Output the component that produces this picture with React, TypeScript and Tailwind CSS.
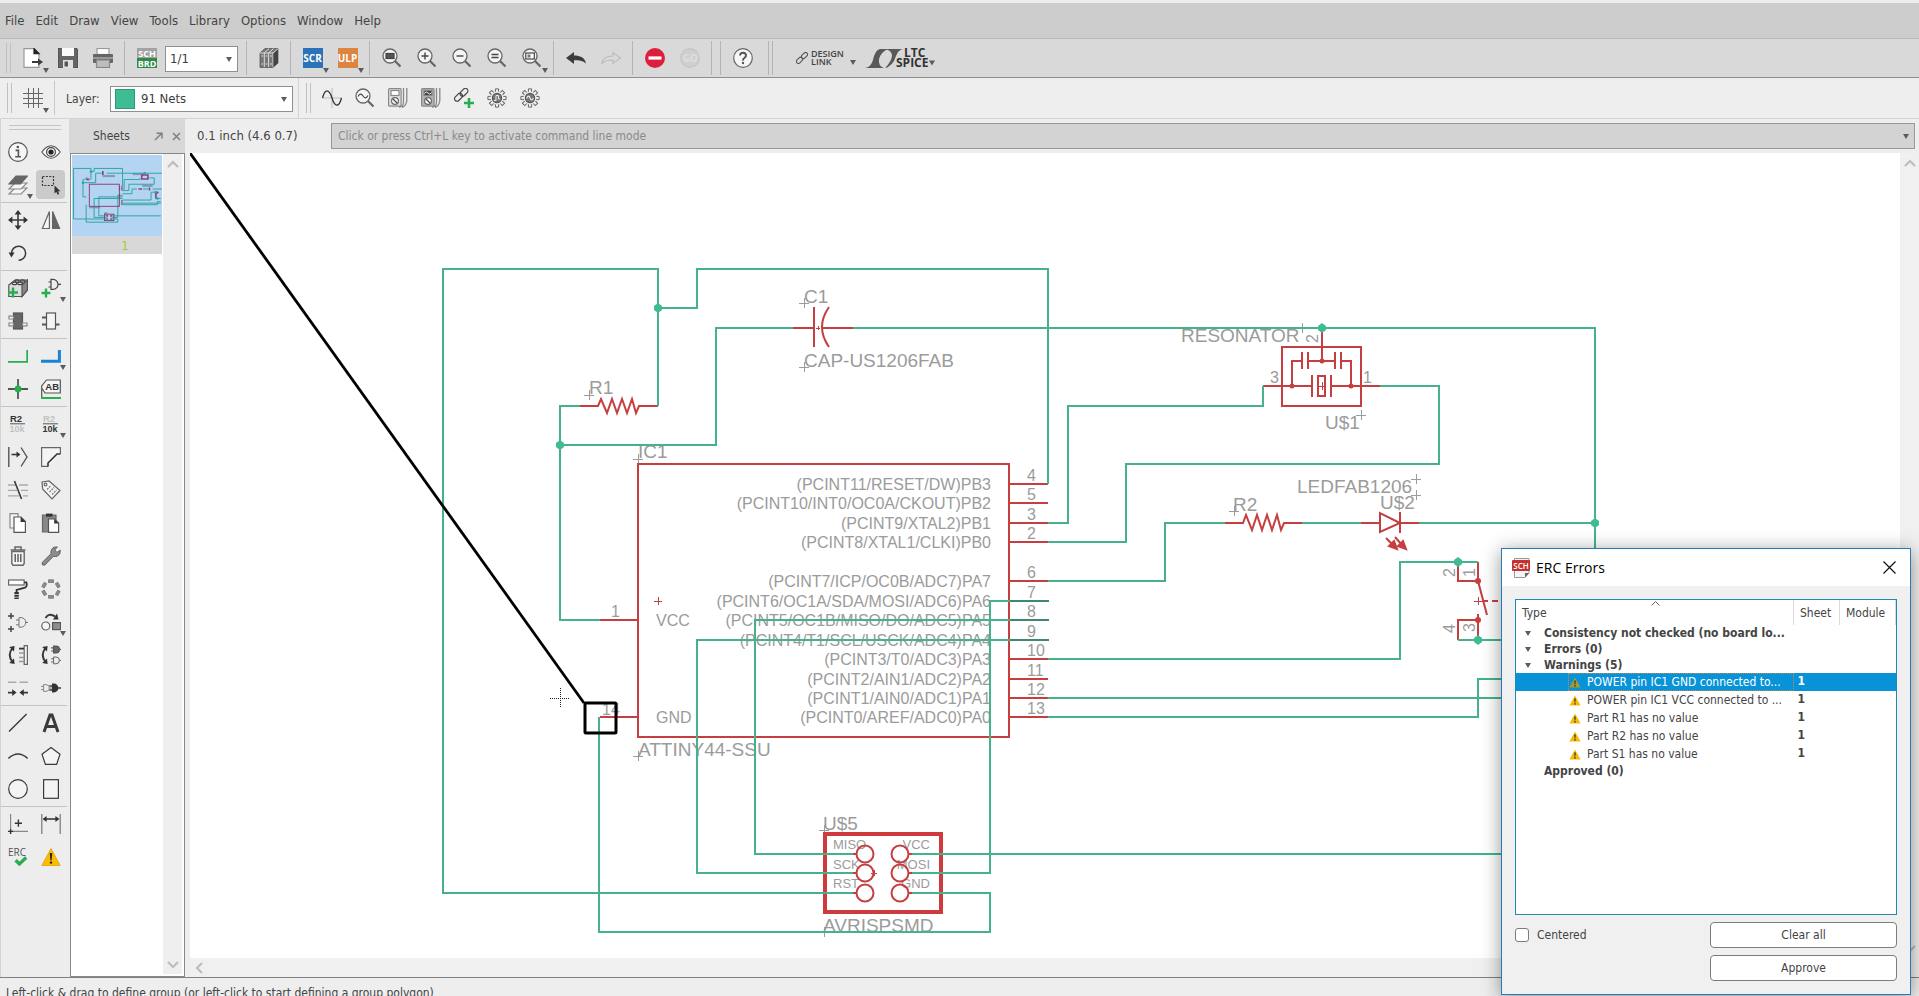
import React, { ReactNode } from "react";

const D = "#3a3a3a";
const GREEN = "#27ae50";
const NET = "#45b28c";
const RED = "#c63f40";
const LABEL = "#9b9b9b";

/* ---------- small shared parts ---------- */

function Icon({ children, size = 20 }: { children: ReactNode; size?: number }) {
  return (
    <svg viewBox="0 0 20 20" width={size} height={size} fill="none" stroke={D} strokeWidth="1.2" aria-hidden="true">
      {children}
    </svg>
  );
}

function DownArrow({ className = "" }: { className?: string }) {
  return (
    <svg viewBox="0 0 6 5" className={"pointer-events-none h-[5px] w-[6px] " + className} aria-hidden="true">
      <path d="M0 0H6L3 5Z" fill="#5c5c5c" />
    </svg>
  );
}

function Chevron({ dir }: { dir: "up" | "down" | "left" }) {
  const d = dir === "up" ? "M1 9L6 4L11 9" : dir === "down" ? "M1 4L6 9L11 4" : "M8 1L3 6L8 11";
  return (
    <svg viewBox="0 0 12 12" className="h-3 w-3" aria-hidden="true">
      <path d={d} fill="none" stroke="#bdbdbd" strokeWidth="2.2" />
    </svg>
  );
}

function TopButton({ label, menu, children }: { label: string; menu?: boolean; children: ReactNode }) {
  return (
    <button aria-label={label} className="relative flex h-[38px] w-[35px] shrink-0 items-center justify-center">
      {children}
      {menu && <DownArrow className="absolute right-px bottom-1" />}
    </button>
  );
}

function Separator() {
  return (
    <div className="flex h-[38px] w-[9px] shrink-0 justify-center py-[2px]">
      <div className="w-px bg-[#b4b4b4]" />
    </div>
  );
}

function Grip() {
  return <div className="h-[30px] w-[5px] shrink-0 border-x border-[#c0c0c0]" />;
}

/* ---------- toolbar icons ---------- */

function Magnifier({ children }: { children: ReactNode }) {
  return (
    <Icon>
      <circle cx="8" cy="8" r="7" fill="#f4f4f4" stroke="#666" strokeWidth="1.3" />
      <path d="M13 13L18.5 18.5" stroke="#666" strokeWidth="2.2" />
      {children}
    </Icon>
  );
}

function Gear({ children }: { children: ReactNode }) {
  const teeth = [0, 45, 90, 135, 180, 225, 270, 315];
  return (
    <Icon>
      {teeth.map((a) => (
        <path key={a} d="M8.4 4.2V0.9H11.6V4.2" stroke="#666" fill="#eee" strokeWidth="1" transform={`rotate(${a} 10 10)`} />
      ))}
      <circle cx="10" cy="10" r="6.4" fill="#eee" stroke="none" />
      <circle cx="10" cy="10" r="4.6" fill="#777" stroke="#555" />
      {children}
    </Icon>
  );
}

function Meter({ dark }: { dark?: boolean }) {
  return (
    <Icon>
      <rect x="0.6" y="0.6" width="12.5" height="17.5" rx="1" fill={dark ? "#b5b5b5" : "#e0e0e0"} stroke="#888" />
      <rect x="3" y="2.5" width="8" height="5" fill={dark ? "#444" : "#fff"} stroke="#888" />
      {dark && <path d="M3.5 5.5Q5 2.5 7 5T10.5 4.5" stroke="#eee" strokeWidth="1" />}
      <circle cx="7" cy="13" r="3.4" fill="#fff" stroke="#666" />
      <path d="M5 11L9 15" stroke="#444" />
      <path d="M15.5 0V9M18.8 0V9M15.5 9V14Q15.5 19 11 19M18.8 9V13Q18 18 14 19.4" stroke="#888" strokeWidth="1.3" />
    </Icon>
  );
}

function Toolbar() {
  return (
    <div className="flex h-[39px] shrink-0 items-start border-b border-[#8e8e8e] bg-[#d9d9d9] pl-[6px]">
      <div className="flex h-[38px] w-[9px] items-center">
        <Grip />
      </div>
      <TopButton label="New" menu>
        <Icon>
          <path d="M1 .6H11L16 5.6V19.4H1Z" fill="#fff" stroke="#999" />
          <path d="M11 .6V5.6H16Z" fill="#222" stroke="#222" />
          <path d="M9 14H16" stroke={D} strokeWidth="2" />
          <path d="M15 10.5L20 14L15 17.5Z" fill={D} stroke="none" />
        </Icon>
      </TopButton>
      <TopButton label="Save">
        <Icon>
          <path d="M.5 .5H18.5L19.5 1.5V19.5H.5Z" fill="#666" stroke="#555" />
          <rect x="4" y="0" width="12" height="8" fill="#fafafa" stroke="none" />
          <rect x="5" y="12" width="10" height="8" fill="#e0e0e0" stroke="none" />
          <rect x="6.5" y="13.5" width="3.5" height="5" fill="#555" stroke="none" />
        </Icon>
      </TopButton>
      <TopButton label="Print">
        <Icon>
          <rect x="4" y=".5" width="12" height="6" fill="#fff" stroke="#999" />
          <rect x="0" y="6" width="20" height="9" rx="1" fill="#666" stroke="none" />
          <rect x="0" y="9" width="20" height="2" fill="#999" stroke="none" />
          <rect x="3.5" y="12" width="13" height="7.5" fill="#bdbdbd" stroke="#888" />
        </Icon>
      </TopButton>
      <Separator />
      <TopButton label="Switch to board">
        <Icon>
          <rect width="20" height="10" fill="#a3a3a3" stroke="none" />
          <rect y="10" width="20" height="10" fill="#2f8a49" stroke="none" />
          <g fill="#fff" stroke="none" fontFamily="Open Sans, sans-serif" fontWeight="700" fontSize="9" textAnchor="middle">
            <text x="10" y="8.5">SCH</text>
            <text x="10" y="18.5">BRD</text>
          </g>
        </Icon>
      </TopButton>
      <div className="relative mx-px mt-[7px] h-[26px] w-[73px] shrink-0">
        <select aria-label="Sheet" className="h-full w-full appearance-none border border-[#8f8f8f] bg-white pl-1 text-[13px] text-[#3c3c3c]">
          <option>1/1</option>
        </select>
        <DownArrow className="absolute top-[11px] right-[6px]" />
      </div>
      <div className="w-[3px]" />
      <Separator />
      <TopButton label="Library manager">
        <Icon>
          <path d="M1 5L6 .6H19L19 15L14 19.4H1Z" fill="#777" stroke="#555" strokeWidth=".8" />
          <path d="M1 5H14L19 .8M5.3 5V19M9.6 5V19M14 5V19M5.3 5L10 .6M9.6 5L14.5 .6" stroke="#e8e8e8" strokeWidth=".9" />
          <path d="M2.3 8H4.2M6.6 8H8.5M11 8H13M2.3 16H4.2M6.6 16H8.5M11 16H13" stroke="#ddd" />
          <path d="M14.4 5.4L19 1.5V15L14.4 19Z" fill="#444" stroke="none" />
        </Icon>
      </TopButton>
      <Separator />
      <TopButton label="Run script" menu>
        <span className="flex h-5 w-5 items-center justify-center bg-[#2c72b8] font-['Open_Sans'] text-[10px] font-bold text-white">SCR</span>
      </TopButton>
      <TopButton label="Run ULP" menu>
        <span className="flex h-5 w-5 items-center justify-center bg-[#dd8440] font-['Open_Sans'] text-[10px] font-bold text-white">ULP</span>
      </TopButton>
      <Separator />
      <TopButton label="Zoom to fit">
        <Magnifier>
          <rect x="4" y="5.5" width="8" height="5" fill="#555" stroke="#444" />
        </Magnifier>
      </TopButton>
      <TopButton label="Zoom in">
        <Magnifier>
          <path d="M8 4.5V11.5M4.5 8H11.5" stroke="#444" strokeWidth="1.4" />
        </Magnifier>
      </TopButton>
      <TopButton label="Zoom out">
        <Magnifier>
          <path d="M4.5 8H11.5" stroke="#444" strokeWidth="1.4" />
        </Magnifier>
      </TopButton>
      <TopButton label="Redraw">
        <Magnifier>
          <path d="M4.5 6.5H11.5M4.5 9.5H11.5" stroke="#444" strokeWidth="1.4" />
        </Magnifier>
      </TopButton>
      <TopButton label="Zoom select" menu>
        <Magnifier>
          <rect x="3.8" y="5" width="8.5" height="6" fill="#fff" stroke="#444" />
          <rect x="5.5" y="6.5" width="3" height="3" fill="#777" stroke="none" />
        </Magnifier>
      </TopButton>
      <Separator />
      <TopButton label="Undo">
        <Icon>
          <path d="M0 10L8 4V7.6C14 7.6 19 9.6 20 15.6C17 12.6 13 12.2 8 12.2V16Z" fill="#3c3c3c" stroke="none" />
        </Icon>
      </TopButton>
      <TopButton label="Redo">
        <Icon>
          <path d="M19.4 10L12 4.6V8C6 8 1.5 10 .6 15.5C4 12.5 7 12 12 12V15.4Z" stroke="#bcbcbc" />
        </Icon>
      </TopButton>
      <Separator />
      <TopButton label="Stop">
        <Icon>
          <circle cx="10" cy="10" r="10" fill="#dd1f3e" stroke="none" />
          <rect x="3.5" y="8.4" width="13" height="3.2" fill="#fff" stroke="none" />
        </Icon>
      </TopButton>
      <TopButton label="Go">
        <Icon>
          <circle cx="10" cy="10" r="9.4" fill="#cfcfcf" stroke="#c6c6c6" />
          <text x="10" y="13.6" fontSize="10" textAnchor="middle" fill="#dedede" stroke="none" fontWeight="700" fontFamily="Open Sans, sans-serif">
            GO
          </text>
        </Icon>
      </TopButton>
      <Separator />
      <Separator />
      <TopButton label="Help">
        <Icon>
          <circle cx="10" cy="10" r="9.3" fill="#f7f7f7" stroke="#666" />
          <path d="M7 7.6Q7 4.8 10 4.8T13 7.6Q13 9 11.4 10T10 12.6" stroke="#555" strokeWidth="1.9" />
          <circle cx="10" cy="15" r="1.2" fill="#555" stroke="none" />
        </Icon>
      </TopButton>
      <div className="mt-[2px] ml-2 h-[34px] w-[5px] shrink-0 border-x border-[#b4b4b4]" />
      <button aria-label="Design Link" className="relative ml-[23px] flex h-[38px] w-[60px] shrink-0 items-center gap-[3px]">
        <svg viewBox="0 0 12 12" className="h-3 w-3 shrink-0" fill="none" stroke="#555" strokeWidth="1.1" aria-hidden="true">
          <rect x="5" y="1.5" width="7" height="4" rx="2" transform="rotate(-45 8.5 3.5)" />
          <rect x="0" y="6.3" width="7" height="4" rx="2" transform="rotate(-45 3.5 8.3)" />
        </svg>
        <span className="text-left font-['Open_Sans'] text-[9px] leading-[8px] font-semibold text-[#444]">
          DESIGN
          <br />
          LINK
        </span>
        <DownArrow className="absolute right-0 bottom-[12px]" />
      </button>
      <button aria-label="LTC Spice" className="ml-[9px] h-[38px] w-[72px] shrink-0">
        <svg viewBox="0 0 72 38" className="h-[38px] w-[72px]" aria-hidden="true">
          <path d="M0 29Q6 28 8 21Q10 11 15 10H23Q16 13 14 20Q13 27 19 29Z" fill="#595959" />
          <path d="M20 10H38Q33 11 31 17Q28 27 20 29Q27 22 27 16Q26 11 20 10Z" fill="#595959" />
          <g fill="#333" fontFamily="Open Sans, sans-serif" fontWeight="700" fontSize="12">
            <text x="39" y="18">LTC</text>
            <text x="31" y="28">SPICE</text>
          </g>
          <path d="M64 21.5H70L67 26.5Z" fill="#5c5c5c" />
        </svg>
      </button>
    </div>
  );
}

function LayerBar() {
  const btn = "flex h-[38px] w-[33px] shrink-0 items-center justify-center";
  return (
    <div className="flex h-[41px] shrink-0 items-center border-b border-[#d3d3d3] bg-[#eeeeee] pl-[7px]">
      <Grip />
      <button aria-label="Grid" className="relative ml-[3px] flex h-[38px] w-[35px] items-center justify-center">
        <Icon>
          <path d="M5.5 0V20M10.5 0V20M15.5 0V20M0 5.5H20M0 10.5H20M0 15.5H20" stroke="#666" strokeWidth="1" />
        </Icon>
        <DownArrow className="absolute right-px bottom-1" />
      </button>
      <div className="ml-1 h-[34px] w-px bg-[#c8c8c8]" />
      <label htmlFor="layer" className="mt-[2px] ml-[11px] w-[44px]">
        Layer:
      </label>
      <div className="relative mt-[2px] h-[26px] w-[183px]">
        <select id="layer" className="h-full w-full appearance-none border border-[#8f8f8f] bg-white pl-[30px] text-[13px] text-[#3c3c3c]">
          <option>91 Nets</option>
        </select>
        <span className="pointer-events-none absolute top-[3px] left-[5px] h-5 w-5 border border-[#2c9a76] bg-[#3fbc93]" />
        <DownArrow className="absolute top-[11px] right-[6px]" />
      </div>
      <div className="ml-[5px] h-10 w-px bg-[#d3d3d3]" />
      <div className="ml-[7px]">
        <Grip />
      </div>
      <div className="ml-1 flex">
        <button aria-label="Simulate" className={btn}>
          <Icon>
            <path d="M10 0V20M0 10H20" stroke="#bbb" strokeWidth="1" />
            <path d="M.5 10C3 .5 7 .5 10 10S17 19.5 19.5 10" stroke="#333" strokeWidth="1.3" />
          </Icon>
        </button>
        <button aria-label="Probe" className={btn}>
          <Magnifier>
            <path d="M3 8.5Q5.5 4 8 8T13 7.5" stroke="#444" strokeWidth="1.1" />
          </Magnifier>
        </button>
        <button aria-label="Voltage meter" className={btn}>
          <Meter />
        </button>
        <button aria-label="Current meter" className={btn}>
          <Meter dark />
        </button>
        <button aria-label="Add model" className={btn}>
          <Icon>
            <rect x="5.5" y="1.8" width="9" height="5" rx="2.5" stroke="#444" transform="rotate(-45 10 4.3)" />
            <rect x="0" y="6.8" width="9" height="5" rx="2.5" stroke="#444" transform="rotate(-45 4.5 9.3)" />
            <path d="M15 10V20M10 15H20" stroke={GREEN} strokeWidth="2.6" />
          </Icon>
        </button>
        <button aria-label="Simulation settings" className={btn}>
          <Gear>
            <path d="M7 12.5H9V7.5H11.5V11H13" stroke="#eee" strokeWidth="1" />
          </Gear>
        </button>
        <button aria-label="Source settings" className={btn}>
          <Gear>
            <path d="M6.5 10.5Q8.5 6 10 10T13.5 10" stroke="#eee" strokeWidth="1.1" />
          </Gear>
        </button>
      </div>
    </div>
  );
}

/* ---------- left tool box ---------- */

type Tool = { name: string; art: ReactNode; menu?: boolean; active?: boolean };

const svgText = { stroke: "none", fontFamily: "Liberation Sans, sans-serif", fontWeight: 700 } as const;
const GATE = "M0 -3.4H2.4A3.4 3.4 0 0 1 2.4 3.4H0ZM-2.5 -1.6H0M-2.5 1.6H0M5.8 0H8.5";

const toolGroups: Tool[][] = [
  [
    {
      name: "Info",
      art: (
        <>
          <circle cx="10" cy="10" r="9.3" fill="#f6f6f6" stroke="#555" />
          <path d="M7.6 8.4H10.4V14.6M7.2 14.8H13" stroke="#555" strokeWidth="1.6" />
          <circle cx="9.8" cy="5" r="1.3" fill="#555" stroke="none" />
        </>
      ),
    },
    {
      name: "Show",
      art: (
        <>
          <path d="M.8 10Q10 -2.5 19.2 10Q10 22.5 .8 10Z" fill="#f6f6f6" stroke="#555" />
          <circle cx="10" cy="10" r="4.4" stroke="#444" />
          <circle cx="10" cy="10" r="2.6" fill="#222" stroke="none" />
        </>
      ),
    },
    {
      name: "Layers",
      menu: true,
      art: (
        <>
          <path d="M1 19L7 13H19L13 19Z" fill="#f6f6f6" stroke="#888" />
          <path d="M1 14L7 8H19L13 14Z" fill="#f6f6f6" stroke="#888" />
          <path d="M1 9L8 1H19.5L12.5 9Z" fill="#666" stroke="#666" />
        </>
      ),
    },
    {
      name: "Group",
      active: true,
      art: (
        <>
          <rect x="1.5" y="1.5" width="11" height="9" stroke="#333" strokeDasharray="2 1.4" />
          <path d="M13.5 10.5V18.5L15.3 16.8L16.6 19.8L18.2 19L17 16.2H19.4Z" fill="#333" stroke="none" />
        </>
      ),
    },
  ],
  [
    {
      name: "Move",
      art: (
        <>
          <path d="M10 3V17M3 10H17" strokeWidth="1.6" />
          <path d="M10 0L6.6 4.4H13.4ZM10 20L6.6 15.6H13.4ZM0 10L4.4 6.6V13.4ZM20 10L15.6 6.6V13.4Z" fill="#333" stroke="none" />
        </>
      ),
    },
    {
      name: "Mirror",
      art: (
        <>
          <path d="M8.4 1.5V18.5H1.4Z" fill="#f6f6f6" stroke="#666" />
          <path d="M11.6 1.5V18.5H18.6Z" fill="#666" stroke="#666" />
        </>
      ),
    },
    {
      name: "Rotate",
      art: (
        <>
          <path d="M3.6 10A7 7 0 1 1 10.6 17.2" strokeWidth="1.5" />
          <path d="M.6 9.5H6.6L3.4 14.4Z" fill="#333" stroke="none" />
        </>
      ),
    },
  ],
  [
    {
      name: "Add part",
      art: (
        <>
          <path d="M.8 7L7 2H19.4V12L14 18.5H.8Z" fill="#ddd" stroke="#555" />
          <path d="M14 7L19.4 2V12L14 18.5Z" fill="#888" stroke="#555" />
          <ellipse cx="6.5" cy="5.4" rx="2.4" ry="1.2" stroke="#444" />
          <ellipse cx="12" cy="5.4" rx="2.4" ry="1.2" stroke="#444" />
          <ellipse cx="9" cy="3" rx="2.2" ry="1.1" stroke="#444" />
          <ellipse cx="14.5" cy="3" rx="2.2" ry="1.1" stroke="#444" />
          <path d="M5 9.5V19.5M0 14.5H10" stroke={GREEN} strokeWidth="2.4" />
        </>
      ),
    },
    {
      name: "Add gate",
      menu: true,
      art: (
        <>
          <path d="M10 1.4H12A5 5 0 0 1 12 11.4H10ZM7.5 4H10M7.5 9H10M17 6.4H20" stroke="#444" />
          <path d="M5 10.5V19.5M.5 15H9.5" stroke={GREEN} strokeWidth="2.4" />
        </>
      ),
    },
    {
      name: "Package",
      art: (
        <>
          <rect x="5.5" y="2" width="9" height="16" fill="#666" stroke="#555" />
          <path d="M1 5.2H5.5V8H1ZM1 12H5.5V14.8H1ZM14.5 12H19V14.8H14.5Z" fill="#f4f4f4" stroke="#888" />
        </>
      ),
    },
    {
      name: "Symbol",
      art: (
        <>
          <rect x="5.5" y="2" width="9" height="16" fill="#f4f4f4" stroke="#555" />
          <path d="M1 6.5H5.5M1 13.5H5.5M14.5 13.5H18.5" stroke="#555" strokeWidth="1.8" />
        </>
      ),
    },
  ],
  [
    { name: "Net", art: <path d="M0 15.8H19.2V4" stroke={GREEN} strokeWidth="1.8" /> },
    { name: "Bus", menu: true, art: <path d="M0 15.2H18.4V4" stroke="#1583d8" strokeWidth="3" /> },
    {
      name: "Junction",
      art: (
        <>
          <path d="M10 0V20M0 10H20" stroke="#555" strokeWidth="1.8" />
          <circle cx="10" cy="10" r="3.4" fill={GREEN} stroke="none" />
        </>
      ),
    },
    {
      name: "Label",
      art: (
        <>
          <path d="M.7 18V7L5.5 1H19.3V14H4L.7 9" fill="#f4f4f4" stroke="#555" />
          <path d="M0 19H20" stroke={GREEN} strokeWidth="2" />
          <text x="11.2" y="11.4" fontSize="9.5" textAnchor="middle" fill="#333" {...svgText}>
            AB
          </text>
        </>
      ),
    },
  ],
  [
    {
      name: "Name",
      art: (
        <>
          <text x="2" y="8" fontSize="9.5" fill="#333" {...svgText}>
            R2
          </text>
          <path d="M2 9.8H17" stroke="#555" strokeWidth="1" />
          <text x="1.5" y="18" fontSize="9" fill="#c2c2c2" {...svgText}>
            10k
          </text>
        </>
      ),
    },
    {
      name: "Value",
      menu: true,
      art: (
        <>
          <text x="2" y="8" fontSize="9.5" fill="#c2c2c2" {...svgText}>
            R2
          </text>
          <path d="M2 9.8H17" stroke="#555" strokeWidth="1" />
          <text x="1.5" y="18" fontSize="9" fill="#333" {...svgText}>
            10k
          </text>
        </>
      ),
    },
    {
      name: "Split",
      art: (
        <>
          <path d="M.8 0V20M13 .5L19 10L13 19.5" stroke="#555" strokeWidth="1.4" />
          <path d="M3.5 7.5H10" strokeWidth="1.6" />
          <path d="M8.5 4.5L12.5 7.5L8.5 10.5Z" fill="#333" stroke="none" />
        </>
      ),
    },
    {
      name: "Miter",
      art: (
        <>
          <path d="M7 19.4H.6V.6H19.4V7" fill="#f4f4f4" stroke="#666" />
          <path d="M7 19.4V16L16 7H19.4" stroke="#333" strokeWidth="1.6" />
        </>
      ),
    },
    {
      name: "Smash",
      art: (
        <>
          <path d="M0 5H8M11 5H20M0 10.4H9M13 10.4H20M0 15.8H11M15 15.8H20" stroke="#aaa" strokeWidth="1.3" />
          <path d="M6.5 1L13.5 19" strokeWidth="1.6" />
        </>
      ),
    },
    {
      name: "Attribute",
      art: (
        <>
          <path d="M1 2L8 1L19 10.5L11 18.8L1.6 9Z" fill="#f4f4f4" stroke="#666" />
          <circle cx="4.5" cy="4.6" r="1.4" stroke="#666" />
          <path d="M6 9.5L10 5.5M8.5 12L13 7.5M11 14.5L15.5 10" stroke="#777" strokeDasharray="2 .8" />
        </>
      ),
    },
    {
      name: "Copy",
      art: (
        <>
          <path d="M2 .6H10V15H2Z" fill="#f4f4f4" stroke="#888" />
          <path d="M6 4H13L17.4 8.6V19.4H6Z" fill="#fff" stroke="#555" />
          <path d="M12.6 4V9H17.6Z" fill="#333" stroke="none" />
        </>
      ),
    },
    {
      name: "Paste",
      art: (
        <>
          <path d="M1.5 2H15V19H1.5Z" fill="#888" stroke="#666" />
          <path d="M5 .6H11.5V3.6H5Z" fill="#333" stroke="none" />
          <path d="M7.5 6H13.6L17.6 10V19.4H7.5Z" fill="#fff" stroke="#555" />
          <path d="M13.2 6V10.6H17.8Z" fill="#333" stroke="none" />
        </>
      ),
    },
    {
      name: "Delete",
      art: (
        <>
          <path d="M3.8 5.5H16.2V17.5L15 19.2H5L3.8 17.5Z" fill="#f4f4f4" stroke="#666" strokeWidth="1.4" />
          <path d="M2.6 4H17.4M7 3.4V1H13V3.4" stroke="#666" strokeWidth="1.5" />
          <path d="M7.2 8V16M10 8V16M12.8 8V16" stroke="#555" strokeWidth="1.4" />
        </>
      ),
    },
    {
      name: "Change",
      art: (
        <path
          d="M1.2 16.5L10 7.8Q9.4 3 13 1.2L16.4 .9L13.8 4L16 6.4L19.3 4.2Q19.6 8.8 16.6 10Q14.2 11 12.4 10.2L4 18.9Q2 19.6 1.2 18.6Z"
          fill="#8d8d8d"
          stroke="#555"
          strokeWidth=".9"
        />
      ),
    },
    {
      name: "Paint format",
      art: (
        <>
          <rect x=".6" y="1" width="15.5" height="5" fill="#fff" stroke="#666" />
          <path d="M16.2 3.4H18.4Q19.6 7.5 17 8.6L8.6 11V13" stroke="#333" strokeWidth="1.8" />
          <path d="M8.6 13V20" stroke="#333" strokeWidth="4.4" strokeDasharray="2 .7" />
        </>
      ),
    },
    {
      name: "Array",
      art: (
        <g fill="#8d8d8d" stroke="#777" strokeWidth=".8">
          {[0, 60, 120, 180, 240, 300].map((a) => (
            <rect key={a} x="7.6" y=".8" width="4.8" height="2.8" transform={`rotate(${a} 10 10)`} />
          ))}
        </g>
      ),
    },
    {
      name: "Invoke",
      art: (
        <>
          <path d="M3 1V7M0 4H6M3 14V20M0 17H6" stroke="#444" strokeWidth="1.5" />
          <path d="M11 5.6H13A4.6 4.6 0 0 1 13 15.2H11ZM8 8H11M8 12.8H11M17 10.4H20" stroke="#777" strokeWidth="1" />
        </>
      ),
    },
    {
      name: "Replace",
      menu: true,
      art: (
        <>
          <circle cx="4.8" cy="14" r="4" fill="#f6f6f6" stroke="#666" />
          <rect x="11.6" y="10.6" width="8" height="7" fill="#8d8d8d" stroke="#555" />
          <path d="M4.5 6Q8 .4 14 4.4" strokeWidth="2" />
          <path d="M12 7.5L17.5 7.5L16 1.5Z" fill="#333" stroke="none" />
        </>
      ),
    },
    {
      name: "Pin swap",
      art: (
        <>
          <path d="M4.5 3Q-1 10 4.5 17" strokeWidth="2" />
          <path d="M1.2 2L6.6 1L6 6.4ZM1.2 18L6.6 19L6 13.6Z" fill="#333" stroke="none" />
          <path d="M16.2 .6H19.4V19.4H16.2Z" fill="#f4f4f4" stroke="#666" />
          <path d="M11 3.6H16" stroke="#333" strokeWidth="1.8" />
          <path d="M11 8H16M11 12.4H16M11 16.4H16" stroke="#999" strokeWidth="1.5" />
        </>
      ),
    },
    {
      name: "Gate swap",
      art: (
        <>
          <path d="M4.5 3Q-1 10 4.5 17" strokeWidth="2" />
          <path d="M1.2 2L6.6 1L6 6.4ZM1.2 18L6.6 19L6 13.6Z" fill="#333" stroke="none" />
          <path d={GATE} transform="translate(12.6 4.4)" fill="#666" stroke="#555" />
          <path d={GATE} transform="translate(12.6 15.4)" stroke="#666" strokeWidth="1" />
        </>
      ),
    },
    {
      name: "Join wires",
      art: (
        <>
          <path d="M0 4.2H8.4M11.4 4.2H20" stroke="#aaa" strokeWidth="1.5" />
          <path d="M0 14.6H5M15 14.6H20" strokeWidth="1.7" />
          <path d="M4.2 11.2L8.6 14.6L4.2 18ZM15.8 11.2L11.4 14.6L15.8 18Z" fill="#333" stroke="none" />
        </>
      ),
    },
    {
      name: "Place gate",
      art: (
        <>
          <path d={GATE} transform="translate(2.6 10)" stroke="#888" strokeWidth="1" />
          <path d="M11 5.6H13A4.4 4.4 0 0 1 13 14.4H11Z" fill="#333" stroke="none" />
          <path d="M8.4 8H11M8.4 12H11M17 10H20" strokeWidth="1.5" />
        </>
      ),
    },
  ],
  [
    { name: "Line", art: <path d="M1 18.6L18.6 1" strokeWidth="1.4" /> },
    { name: "Text", art: <path d="M3 19L9 2H11L17 19M5.6 13.4H14.4" strokeWidth="3" /> },
    { name: "Arc", art: <path d="M.4 12.4Q10 3.6 19.6 12.4" strokeWidth="1.5" /> },
    { name: "Polygon", art: <path d="M10 1.4L19 8.2L15.6 18.4H4.4L1 8.2Z" fill="#f4f4f4" /> },
    { name: "Circle", art: <circle cx="10" cy="10" r="9.3" fill="#f4f4f4" /> },
    { name: "Rectangle", art: <rect x="2.6" y=".7" width="14.8" height="18.6" fill="#f4f4f4" /> },
  ],
  [
    {
      name: "Mark",
      art: (
        <>
          <path d="M2.6 0V16M4 17.4H20" stroke="#888" strokeWidth="1.2" />
          <path d="M2.6 15V20M0 17.4H5.2M10.4 5.6V12.8M6.8 9.2H14" stroke="#333" strokeWidth="1.4" />
        </>
      ),
    },
    {
      name: "Dimension",
      art: (
        <>
          <path d="M.8 0V20M19.2 0V20" stroke="#777" strokeWidth="1.2" />
          <path d="M4 5H16" strokeWidth="1.6" />
          <path d="M1.6 5L5.6 2V8ZM18.4 5L14.4 2V8Z" fill="#333" stroke="none" />
        </>
      ),
    },
    {
      name: "ERC",
      art: (
        <>
          <text x="0" y="9" fontSize="10" fill="#555" stroke="none" fontFamily="Open Sans, sans-serif">
            ERC
          </text>
          <path d="M7.6 13.2L11.4 17L18.2 10.6" stroke={GREEN} strokeWidth="3.4" />
        </>
      ),
    },
    {
      name: "Errors",
      art: (
        <>
          <path d="M10 1.5L19.2 18.5H.8Z" fill="#fbbc04" stroke="#e0a500" strokeWidth=".8" strokeLinejoin="round" />
          <path d="M8.8 6H11.2L10.6 13.4H9.4Z" fill="#222" stroke="none" />
          <circle cx="10" cy="15.6" r="1.2" fill="#222" stroke="none" />
        </>
      ),
    },
  ],
];

function ToolBox() {
  return (
    <aside className="flex w-[69px] shrink-0 flex-col border-l border-[#d3d3d3] bg-[#ededed]">
      <div className="mx-2 mt-[6px] mb-[5px] h-[5px] shrink-0 border-y border-[#c4c4c4]" />
      {toolGroups.map((group, i) => (
        <div key={i} className="mr-[2px] grid grid-cols-2 border-b border-[#c4c4c4] pb-px last:border-0">
          {group.map((tool) => (
            <button key={tool.name} aria-label={tool.name} className="relative flex h-[33px] items-center justify-center">
              <span className={"flex h-[29px] w-[29px] items-center justify-center " + (tool.active ? "rounded-sm bg-[#cacaca]" : "")}>
                <Icon>{tool.art}</Icon>
              </span>
              {tool.menu && <DownArrow className="absolute right-px bottom-[2px]" />}
            </button>
          ))}
        </div>
      ))}
    </aside>
  );
}

/* ---------- schematic ---------- */

const NET_PATHS =
  "M853 893H443V269H658V406M658 308H697V269H1048V484" +
  "M580 406H560V620H600M560 445H716V328H793M853 328H1595V860" +
  "M1048 523H1068V406H1263V386M1048 542H1126V464H1439V386H1380" +
  "M1048 581H1165V523H1225M1302 523H1361M1419 523H1595" +
  "M1048 659H1400V562H1478M1458 640H1520M1048 698H1520M1048 717H1478V679H1520" +
  "M1048 601H990V873H911M1048 620H755V854H853M1048 640H697V873H853" +
  "M911 854H1520M911 893H990V932H599V717";

const NODES: [number, number][] = [
  [658, 308],
  [560, 445],
  [1322, 328],
  [1595, 523],
  [1458, 562],
  [1478, 640],
];

const PINS: { n: string; y: number; label: string; joined?: boolean }[] = [
  { n: "4", y: 484, label: "(PCINT11/RESET/DW)PB3" },
  { n: "5", y: 503, label: "(PCINT10/INT0/OC0A/CKOUT)PB2" },
  { n: "3", y: 523, label: "(PCINT9/XTAL2)PB1" },
  { n: "2", y: 542, label: "(PCINT8/XTAL1/CLKI)PB0" },
  { n: "6", y: 581, label: "(PCINT7/ICP/OC0B/ADC7)PA7" },
  { n: "7", y: 601, label: "(PCINT6/OC1A/SDA/MOSI/ADC6)PA6", joined: true },
  { n: "8", y: 620, label: "(PCINT5/OC1B/MISO/DO/ADC5)PA5", joined: true },
  { n: "9", y: 640, label: "(PCINT4/T1/SCL/USCK/ADC4)PA4", joined: true },
  { n: "10", y: 659, label: "(PCINT3/T0/ADC3)PA3" },
  { n: "11", y: 679, label: "(PCINT2/AIN1/ADC2)PA2" },
  { n: "12", y: 698, label: "(PCINT1/AIN0/ADC1)PA1" },
  { n: "13", y: 717, label: "(PCINT0/AREF/ADC0)PA0" },
];

const NAMES: [number, number, string][] = [
  [804, 303, "C1"],
  [804, 367, "CAP-US1206FAB"],
  [589, 394, "R1"],
  [638, 458, "IC1"],
  [638, 756, "ATTINY44-SSU"],
  [823, 830, "U$5"],
  [823, 932, "AVRISPSMD"],
  [1181, 342, "RESONATOR"],
  [1325, 429, "U$1"],
  [1297, 493, "LEDFAB1206"],
  [1380, 509, "U$2"],
  [1233, 511, "R2"],
];

const ORIGINS: [number, number][] = [
  [804, 303],
  [804, 367],
  [589, 395],
  [638, 459],
  [638, 756],
  [824, 830],
  [824, 932],
  [1302, 328],
  [1361, 415],
  [1416, 479],
  [1416, 495],
  [1234, 511],
];

function Plus({ x, y, r = 5, color = LABEL }: { x: number; y: number; r?: number; color?: string }) {
  return <path d={`M${x - r} ${y}H${x + r}M${x} ${y - r}V${y + r}`} stroke={color} strokeWidth="1" shapeRendering="crispEdges" />;
}

function Schematic() {
  return (
    <svg viewBox="190 153 1710 804" width="1710" height="804" className="absolute top-0 left-0" fill="none" fontFamily="Liberation Sans, sans-serif" role="img" aria-label="Schematic">
      <g fill={LABEL} fontSize="16">
        {PINS.map((p) => (
          <React.Fragment key={p.n}>
            <text x="991" y={p.y + 6} textAnchor="end">
              {p.label}
            </text>
            <text x="1027" y={p.y - 3}>
              {p.n}
            </text>
          </React.Fragment>
        ))}
        <text x="656" y="626">VCC</text>
        <text x="656" y="723">GND</text>
        <text x="611" y="617">1</text>
        <text x="602" y="715">14</text>
        <text x="1270" y="383">3</text>
        <text x="1363" y="383">1</text>
        <text transform="translate(1318 343) rotate(-90)">2</text>
        <text transform="translate(1455 577) rotate(-90)">2</text>
        <text transform="translate(1475 577) rotate(-90)">1</text>
        <text transform="translate(1455 633) rotate(-90)">4</text>
        <text transform="translate(1475 632) rotate(-90)">3</text>
      </g>
      <g fill={LABEL} fontSize="13">
        <text x="833" y="849">MISO</text>
        <text x="833" y="869">SCK</text>
        <text x="833" y="888">RST</text>
        <text x="930" y="849" textAnchor="end">VCC</text>
        <text x="930" y="869" textAnchor="end">MOSI</text>
        <text x="930" y="888" textAnchor="end">GND</text>
      </g>
      <g fill={LABEL} fontSize="19">
        {NAMES.map(([x, y, t]) => (
          <text key={t} x={x} y={y}>
            {t}
          </text>
        ))}
      </g>
      {ORIGINS.map(([x, y]) => (
        <Plus key={`${x}-${y}`} x={x} y={y} />
      ))}

      {/* symbols */}
      <g stroke={RED} strokeWidth="2">
        <rect x="638" y="464" width="371" height="273" />
        <path d="M600 620H638M600 717H638" />
        <path d="M580 406H598L601 399L607 413L612 399L617 413L622 399L627 413L632 399L636 413L639 406H658" />
        <path d="M793 328H814M814 307V347M829 307Q815 327 829 347M822 328H853" />
        <path d="M1225 523H1243L1246 515L1252 530L1257 515L1262 530L1267 515L1272 530L1277 515L1281 530L1284 523H1302" />
        <path d="M1361 523H1380M1380 513V532L1400 523ZM1400 512V533M1400 523H1419" />
        <path d="M1386 538L1393 545M1395 537L1402 545" />
        <path d="M1397 549L1389 546L1394 541ZM1406 549L1398 546L1403 541Z" fill={RED} />
        <rect x="1282" y="347" width="79" height="59" />
        <path d="M1322 328V361M1292 386V361H1302M1308 361H1335M1341 361H1351V386M1302 352V369M1308 352V369M1335 352V369M1341 352V369" />
        <path d="M1263 386H1312M1312 375V397M1331 375V397M1331 386H1380M1318 376H1325V396H1318Z" />
        <path d="M1458 562V581H1478M1478 562V581L1487 615M1478 614V640M1478 620H1458V640" />
        <path d="M1482 601H1500" strokeDasharray="6 4" />
        <rect x="825" y="834" width="116" height="78" strokeWidth="4" stroke="#cf3b3d" />
      </g>
      <g fill={RED}>
        <circle cx="1292" cy="386" r="2.5" />
        <circle cx="1351" cy="386" r="2.5" />
        <circle cx="1322" cy="361" r="2.5" />
        <circle cx="1478" cy="581" r="3" />
        <circle cx="1478" cy="620" r="3" />
      </g>
      {PINS.map((p) => (
        <path key={p.n} d={`M1010 ${p.y}H1048`} stroke={RED} strokeWidth="2" />
      ))}

      {/* nets */}
      <path d={NET_PATHS} stroke={NET} strokeWidth="2" />
      {PINS.filter((p) => p.joined).map((p) => (
        <path key={p.n} d={`M1010 ${p.y}H1049`} stroke="#3f8a6c" strokeWidth="2" />
      ))}
      {NODES.map(([x, y]) => (
        <path key={`${x}-${y}`} d={`M${x} ${y - 5}L${x + 4} ${y - 2}V${y + 2}L${x} ${y + 5}L${x - 4} ${y + 2}V${y - 2}Z`} fill="#3fbc93" />
      ))}
      <g stroke={RED} strokeWidth="2">
        {[854, 873, 893].map((y) => (
          <React.Fragment key={y}>
            <circle cx="865" cy={y} r="8.5" />
            <circle cx="900" cy={y} r="8.5" />
            <path d={`M853 ${y}H857M908 ${y}H912`} />
          </React.Fragment>
        ))}
      </g>
      <Plus x={874} y={873} r={3} color={RED} />
      <Plus x={658} y={601} r={4} color={RED} />
      <Plus x={818} y={328} r={2} color={RED} />
      <Plus x={1322} y={386} r={4} color={RED} />
      <Plus x={1478} y={601} r={4} color={RED} />

      {/* error marker and cursor */}
      <path d="M190 153L584 703" stroke="#000" strokeWidth="2.8" />
      <rect x="585" y="703" width="31" height="30" stroke="#000" strokeWidth="3" rx="1" />
      <path d="M550 698.5H570M560.5 688V708" stroke="#222" strokeWidth="1" strokeDasharray="1 1" />
    </svg>
  );
}

function SheetThumbnail() {
  const labels = [
    [800, 350, 155],
    [1175, 325, 130],
    [1290, 470, 130],
    [636, 735, 135],
    [823, 810, 40],
    [588, 380, 40],
  ];
  return (
    <svg viewBox="424 103 1111 1000" className="block h-[81px] w-[90px] bg-[#b3d4f2]" fill="none" aria-hidden="true">
      {labels.map(([x, y, w]) => (
        <rect key={x} x={x} y={y} width={w} height="26" fill="#7f9cc0" />
      ))}
      <path d={NET_PATHS} stroke="#2fa3a3" strokeWidth="12" />
      <g stroke="#8f4173" strokeWidth="12">
        <rect x="638" y="464" width="371" height="273" />
        <path d="M1010 484V542M1040 484V542M1010 581V640M1040 660V720" strokeWidth="14" />
        <path d="M805 300V350M600 406H640M1285 350H1361V400H1285ZM1245 523H1290M1380 505V540M1450 590L1490 560M1460 560V640" strokeWidth="20" />
        <rect x="825" y="834" width="116" height="78" />
        <path d="M850 854H870M850 893H870M895 854H915M895 893H915" strokeWidth="20" />
      </g>
      <g fill="#2fa3a3">
        {NODES.map(([x, y]) => (
          <circle key={`${x}-${y}`} cx={x} cy={y} r="16" />
        ))}
      </g>
    </svg>
  );
}

function SheetsPanel() {
  return (
    <section className="flex w-[116px] shrink-0 flex-col">
      <header className="flex h-[34px] shrink-0 items-center bg-[#d8d8d8] pl-6">
        <h2 className="grow">Sheets</h2>
        <button aria-label="Detach" className="mr-[9px]">
          <svg viewBox="0 0 9 9" className="h-[9px] w-[9px]" fill="none" stroke="#808080" strokeWidth="1.5" aria-hidden="true">
            <path d="M1 8L7.5 1.5M2.5 1.2H8V6.5" />
          </svg>
        </button>
        <button aria-label="Close" className="mr-1">
          <svg viewBox="0 0 9 9" className="h-[9px] w-[9px]" stroke="#808080" strokeWidth="1.5" aria-hidden="true">
            <path d="M1 1L8 8M8 1L1 8" />
          </svg>
        </button>
      </header>
      <div className="ml-px flex grow border border-[#888] bg-white">
        <div className="grow pt-px pl-px">
          <button className="block w-[90px] text-[13px]">
            <SheetThumbnail />
            <span className="block bg-[#d8d8d8] pt-[2px] pl-4 text-center leading-4 text-[#a5cc2f]">1</span>
          </button>
        </div>
        <div className="mr-[2px] mb-[2px] flex w-[19px] flex-col items-center justify-between bg-[#efefef] py-1">
          <Chevron dir="up" />
          <Chevron dir="down" />
        </div>
      </div>
    </section>
  );
}

/* ---------- ERC dialog ---------- */

function Warning({ dim }: { dim?: boolean }) {
  return (
    <svg viewBox="0 0 12 11" className="h-[11px] w-3 shrink-0" aria-hidden="true">
      <path d="M6 .4L11.6 10.6H.4Z" fill={dim ? "#a79a35" : "#f6b90c"} />
      <path d="M5.2 3.4H6.8L6.4 7.4H5.6ZM5.2 8.2H6.8V9.6H5.2Z" fill="#3a3a1a" />
    </svg>
  );
}

function GroupRow({ children, open }: { children: ReactNode; open?: boolean }) {
  return (
    <tr className="h-4 font-bold">
      <td colSpan={3} className="p-0">
        <div className="flex h-4 items-center pl-[9px] leading-4">
          <span className="flex w-[19px]">{open && <DownArrow />}</span>
          {children}
        </div>
      </td>
    </tr>
  );
}

const warnings = [
  "POWER pin IC1 GND connected to...",
  "POWER pin IC1 VCC connected to ...",
  "Part R1 has no value",
  "Part R2 has no value",
  "Part S1 has no value",
];

function ErcDialog() {
  const btn = "h-[26px] w-[187px] rounded border border-[#7c7c7c] bg-white leading-6";
  return (
    <div
      role="dialog"
      aria-labelledby="erc-title"
      className="absolute right-2 bottom-px flex h-[447px] w-[410px] flex-col border border-[#2b7ab8] bg-[#f0f0f0] shadow-[0_3px_18px_rgba(0,0,0,0.42)]"
    >
      <header className="flex h-[37px] shrink-0 items-center bg-white pr-[14px] pl-[10px]">
        <svg viewBox="0 0 18 20" className="h-5 w-[18px]" aria-hidden="true">
          <path d="M2.5 .5H17V15L13 19.5H2.5Z" fill="#f4f4f4" stroke="#999" />
          <path d="M13 19.5V15H17Z" fill="#666" />
          <rect x="0" y="2" width="18" height="11" rx="1" fill="#c8302f" />
          <text x="9" y="10.6" fontSize="8" fontWeight="600" textAnchor="middle" fill="#fff" fontFamily="Open Sans, sans-serif">
            SCH
          </text>
        </svg>
        <h2 id="erc-title" className="ml-[6px] grow font-['Open_Sans'] text-[14px] text-black">
          ERC Errors
        </h2>
        <button aria-label="Close">
          <svg viewBox="0 0 13 13" className="h-[13px] w-[13px]" stroke="#111" strokeWidth="1.2" aria-hidden="true">
            <path d="M.5 .5L12.5 12.5M12.5 .5L.5 12.5" />
          </svg>
        </button>
      </header>
      <div className="relative mx-[13px] mt-[13px] grow border border-[#1f8ab0] bg-white">
        <table className="w-full table-fixed border-collapse">
          <thead>
            <tr className="h-[25px] text-left">
              <th className="border-r border-[#dcdcdc] p-0 pl-[6px] font-normal">Type</th>
              <th className="w-[46px] border-r border-[#dcdcdc] p-0 pl-[6px] font-normal">Sheet</th>
              <th className="w-[56px] border-r border-[#dcdcdc] p-0 pl-[6px] font-normal">Module</th>
            </tr>
          </thead>
          <tbody>
            <GroupRow open>Consistency not checked (no board lo...</GroupRow>
            <GroupRow open>Errors (0)</GroupRow>
            <GroupRow open>Warnings (5)</GroupRow>
            {warnings.map((w, i) => (
              <tr key={w} className={i === 0 ? "h-[18px] bg-[#0893d8] text-white" : "h-[18px]"}>
                <td className="p-0 pl-[52px]">
                  <div className={"flex h-[18px] items-center gap-[6px] pl-px leading-[18px] whitespace-nowrap " + (i === 0 ? "outline-1 -outline-offset-1 outline-dotted outline-[#c08a4a]" : "")}>
                    <Warning dim={i === 0} />
                    {w}
                  </div>
                </td>
                <td className="p-0 pl-1 align-top font-bold leading-4">1</td>
                <td className="p-0" />
              </tr>
            ))}
            <GroupRow>Approved (0)</GroupRow>
          </tbody>
        </table>
        <svg viewBox="0 0 9 5" className="absolute top-px left-[135px] h-[5px] w-[9px]" fill="none" stroke="#666" aria-hidden="true">
          <path d="M.5 4.5L4.5 .5L8.5 4.5" />
        </svg>
      </div>
      <div className="mx-[13px] mt-[7px] mb-[13px] flex items-start justify-between">
        <label className="flex h-[26px] items-center gap-2">
          <input type="checkbox" className="h-[14px] w-[14px] appearance-none rounded-[3px] border border-[#7c7c7c] bg-white" />
          Centered
        </label>
        <div className="flex flex-col gap-[7px]">
          <button className={btn}>Clear all</button>
          <button className={btn}>Approve</button>
        </div>
      </div>
    </div>
  );
}

/* ---------- page ---------- */

const menus = ["File", "Edit", "Draw", "View", "Tools", "Library", "Options", "Window", "Help"];

export default function App() {
  return (
    <div className="relative flex h-screen flex-col overflow-hidden bg-[#eeeeee] font-['DejaVu_Sans_Condensed','Noto_Sans',sans-serif] text-[12px] text-[#444444]">
      <nav className="mt-[3px] flex h-9 shrink-0 items-center gap-[11px] border-b border-[#b8b8b8] bg-[#cdcdcd] pl-[5px] text-[13px]">
        {menus.map((m) => (
          <button key={m}>{m}</button>
        ))}
      </nav>
      <Toolbar />
      <LayerBar />
      <main className="flex min-h-0 grow border-b border-[#808080]">
        <ToolBox />
        <SheetsPanel />
        <section className="flex min-w-0 grow flex-col pl-[5px]">
          <div className="flex h-[34px] shrink-0 items-center pr-1 pl-[7px]">
            <output className="w-[134px] shrink-0 text-[13px]">0.1 inch (4.6 0.7)</output>
            <div className="relative grow">
              <input
                aria-label="Command line"
                placeholder="Click or press Ctrl+L key to activate command line mode"
                className="block h-[26px] w-full border border-[#999] bg-[#d3d3d3] pl-[6px] placeholder:text-[#8a8a8a]"
              />
              <DownArrow className="absolute top-[11px] right-[6px]" />
            </div>
          </div>
          <div className="flex min-h-0 grow">
            <div className="relative grow overflow-hidden bg-white">
              <Schematic />
            </div>
            <div className="flex w-[19px] shrink-0 flex-col items-center justify-between bg-[#f0f0f0] py-1">
              <Chevron dir="up" />
              <Chevron dir="down" />
            </div>
          </div>
          <div className="flex h-[19px] shrink-0 items-center bg-[#f0f0f0] pl-1">
            <Chevron dir="left" />
          </div>
        </section>
      </main>
      <footer className="h-[18px] shrink-0 pt-[5px] pl-[6px] leading-5">Left-click &amp; drag to define group (or left-click to start defining a group polygon)</footer>
      <ErcDialog />
    </div>
  );
}
